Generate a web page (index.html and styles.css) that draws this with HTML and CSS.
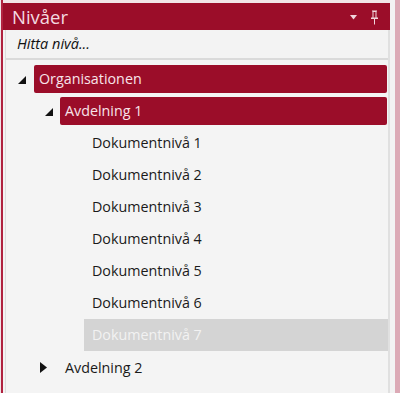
FILE: index.html
```html
<!DOCTYPE html>
<html lang="sv">
<head>
<meta charset="utf-8">
<link rel="stylesheet" href="styles.css">
</head>
<body>
<div class="frame">
  <div class="edge-left"></div>
  <div class="panel">
    <div class="header">
      <span class="title">Nivåer</span>
      <span class="tools">
        <svg class="drop" width="7" height="5" viewBox="0 0 7 5"><path d="M0 0H7L3.5 4.5Z" fill="#f1d5dc"/></svg>
        <svg class="pin" width="9" height="15" viewBox="0 0 9 15"><path d="M2 0.5H7V1.5H6.5V7.5H8V9H5V14.5H4V9H1V7.5H2.5V1.5H2Z M3.5 2V7.5H5.5V2Z" fill="#f1d5dc" fill-rule="evenodd"/></svg>
      </span>
    </div>
    <div class="body">
      <div class="search">Hitta nivå...</div>
      <div class="tree">
        <div class="row lvl0">
          <svg class="exp" width="8" height="8" viewBox="0 0 8 8"><path d="M8 0V8H0Z" fill="#111"/></svg>
          <div class="bar sel">Organisationen</div>
        </div>
        <div class="row lvl1">
          <svg class="exp" width="8" height="8" viewBox="0 0 8 8"><path d="M8 0V8H0Z" fill="#111"/></svg>
          <div class="bar sel">Avdelning 1</div>
        </div>
        <div class="row lvl2"><div class="bar doc">Dokumentnivå 1</div></div>
        <div class="row lvl2"><div class="bar doc">Dokumentnivå 2</div></div>
        <div class="row lvl2"><div class="bar doc">Dokumentnivå 3</div></div>
        <div class="row lvl2"><div class="bar doc">Dokumentnivå 4</div></div>
        <div class="row lvl2"><div class="bar doc">Dokumentnivå 5</div></div>
        <div class="row lvl2"><div class="bar doc">Dokumentnivå 6</div></div>
        <div class="row lvl2"><div class="bar doc dim">Dokumentnivå 7</div></div>
        <div class="row lvl1">
          <svg class="col" width="8" height="11" viewBox="0 0 8 11"><path d="M0 0L7 5.5L0 11Z" fill="#111"/></svg>
          <div class="bar plain">Avdelning 2</div>
        </div>
      </div>
    </div>
  </div>
  <div class="edge-right"></div>
</div>
</body>
</html>
```

FILE: styles.css
```css
html, body {
  margin: 0;
  padding: 0;
  background: #f3f3f3;
  font-family: "Open Sans", "Noto Sans", sans-serif;
}
.frame {
  display: flex;
  width: 400px;
  height: 393px;
  overflow: hidden;
  background: #f3f3f3;
}
.edge-left {
  width: 1px;
  border-right: 2px solid #b0223f;
  background: #f1e3e6;
  flex: none;
}
.panel {
  width: 387px;
  flex: none;
  display: flex;
  flex-direction: column;
  padding-top: 3px;
  background: linear-gradient(#f1e4e7 0 3px, #f3f3f3 3px);
}
.header {
  height: 27px;
  background: #9b0d29;
  display: flex;
  align-items: center;
  justify-content: space-between;
  padding-left: 9px;
  padding-right: 11px;
}
.title {
  color: #f3dbe1;
  font-size: 18.5px;
  line-height: 27px;
}
.tools {
  display: flex;
  align-items: center;
  gap: 13px;
}
.drop { margin-top: 2px; }
.pin { margin-top: 1px; }
.body {
  flex: 1;
  display: flex;
  flex-direction: column;
  margin-left: 2px;
  border-left: 1px solid #dcdcdc;
  border-right: 2px solid #e0e0e0;
}
.search {
  height: 28px;
  line-height: 28px;
  padding-left: 11px;
  font-style: italic;
  font-size: 14.5px;
  color: #111;
  border-bottom: 2px solid #dadada;
}
.tree {
  padding-top: 3px;
  background: #f4f4f4;
  flex: 1;
}
.row {
  height: 32px;
  display: flex;
  align-items: center;
  position: relative;
}
.lvl0 { padding-left: 28px; }
.lvl1 { padding-left: 54px; }
.lvl2 { padding-left: 78px; }
.exp {
  position: absolute;
  top: 13px;
}
.lvl0 .exp { left: 12px; }
.lvl1 .exp { left: 39px; }
.col {
  position: absolute;
  left: 34px;
  top: 11px;
}
.bar {
  flex: 1;
  font-size: 14.3px;
  color: #1a1a1a;
  white-space: nowrap;
}
.sel {
  height: 28px;
  line-height: 28px;
  background: #9b0d29;
  color: #f8e4e9;
  border-radius: 2px;
  padding-left: 5px;
  margin-right: 1px;
}
.doc {
  height: 32px;
  line-height: 32px;
  padding-left: 8px;
}
.dim {
  background: #d4d4d4;
  color: #f2f2f2;
}
.plain {
  padding-left: 5px;
}
.edge-right {
  flex: 1;
  background: linear-gradient(90deg, #f3f3f3 0 5px, #dcaab6 5px);
}
```
